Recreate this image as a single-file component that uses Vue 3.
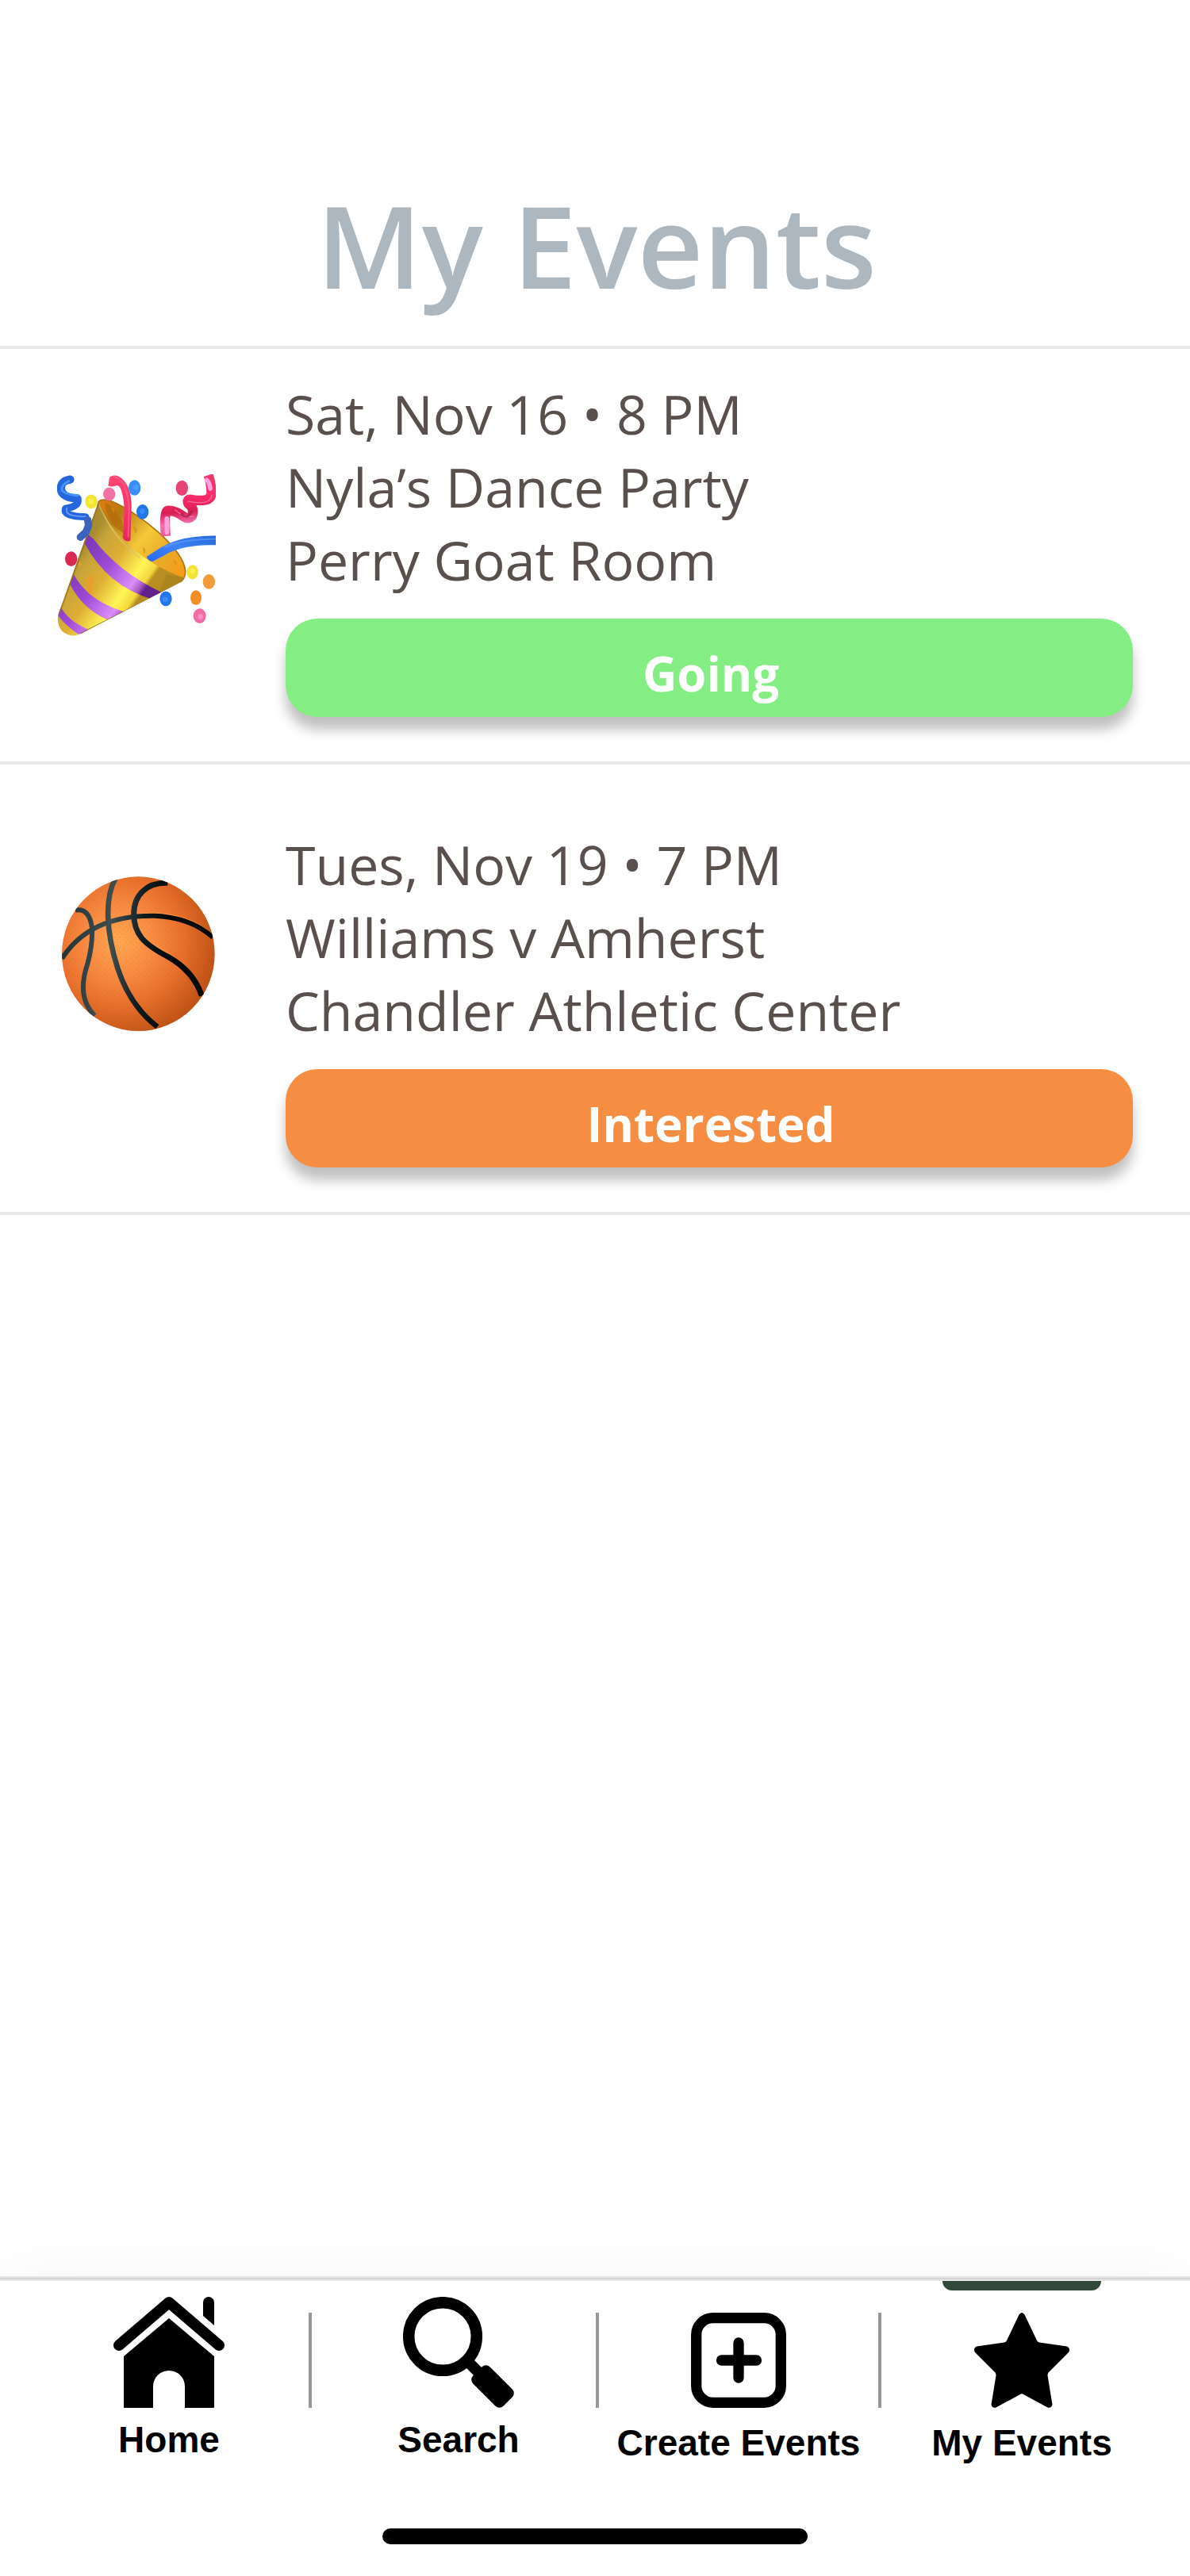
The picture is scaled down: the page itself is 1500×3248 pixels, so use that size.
<script setup>
const events = [
  {
    id: 'party',
    lines: ['Sat, Nov 16 • 8 PM', 'Nyla’s Dance Party', 'Perry Goat Room'],
    status: 'Going',
  },
  {
    id: 'ball',
    lines: ['Tues, Nov 19 • 7 PM', 'Williams v Amherst', 'Chandler Athletic Center'],
    status: 'Interested',
  },
]
</script>

<template>
  <div class="page">
    <header class="header">
      <h1>My Events</h1>
    </header>

    <main class="events">
      <article v-for="event in events" :key="event.id" class="event" :class="event.id">
        <svg v-if="event.id === 'party'" class="emoji" width="200" height="204" viewBox="96 85 600 610" preserveAspectRatio="none" aria-hidden="true">
          <defs>
            <linearGradient id="cone" gradientUnits="userSpaceOnUse" x1="170" y1="400" x2="400" y2="560">
              <stop offset="0" stop-color="#a98d31" />
              <stop offset=".15" stop-color="#c7a43a" />
              <stop offset=".45" stop-color="#dfae35" />
              <stop offset=".78" stop-color="#fff557" />
              <stop offset=".94" stop-color="#f4d83e" />
              <stop offset="1" stop-color="#b98e22" />
            </linearGradient>
            <linearGradient id="mouth" gradientUnits="userSpaceOnUse" x1="260" y1="190" x2="570" y2="470">
              <stop offset="0" stop-color="#e07c12" />
              <stop offset=".2" stop-color="#b67a12" />
              <stop offset=".5" stop-color="#f5c83a" />
              <stop offset=".75" stop-color="#e8ab28" />
              <stop offset="1" stop-color="#f89a18" />
            </linearGradient>
            <linearGradient id="stripe" gradientUnits="userSpaceOnUse" x1="170" y1="400" x2="400" y2="560">
              <stop offset="0" stop-color="#7d39b8" />
              <stop offset=".4" stop-color="#9d4ad6" />
              <stop offset=".82" stop-color="#dc8efa" />
              <stop offset=".93" stop-color="#a95bc4" />
              <stop offset="1" stop-color="#62218c" />
            </linearGradient>
            <linearGradient id="red" x1="0" y1="0" x2="1" y2="1">
              <stop offset="0" stop-color="#ff476d" />
              <stop offset=".6" stop-color="#fb386f" />
              <stop offset="1" stop-color="#d9224f" />
            </linearGradient>
            <linearGradient id="pink" gradientUnits="userSpaceOnUse" x1="500" y1="100" x2="520" y2="320">
              <stop offset="0" stop-color="#e83b69" />
              <stop offset=".35" stop-color="#ff2c6b" />
              <stop offset=".6" stop-color="#d91f52" />
              <stop offset=".8" stop-color="#ee71b0" />
              <stop offset="1" stop-color="#e45a88" />
            </linearGradient>
            <linearGradient id="blue" x1="0" y1="1" x2="1" y2="0">
              <stop offset="0" stop-color="#2867ff" />
              <stop offset=".5" stop-color="#3f84f4" />
              <stop offset="1" stop-color="#2468da" />
            </linearGradient>
            <clipPath id="coneBody">
              <path d="M252 190C300 310 430 430 578 475Q575 487 560 493L190 684Q150 705 116 678Q92 650 101 612Z" />
            </clipPath>
          </defs>
          <path d="M252 190Q262 174 300 186C400 225 575 365 581 450Q582 477 565 485Q490 520 360 390T252 190Z" fill="url(#mouth)" stroke="#a77318" stroke-width="5" />
          <path d="M277 192C300 200 350 240 347 308L313 280Q280 240 277 192Z" fill="#b46c0c" opacity=".75" />
          <path d="M300 210q20 0 10 24zM384 280q25 12 8 30zM420 360q18 8 4 24zM535 405q22 15 8 24z" fill="#d98b14" opacity=".7" />
          <path d="M252 190C300 310 430 430 578 475Q575 487 560 493L190 684Q150 705 116 678Q92 650 101 612Z" fill="url(#cone)" />
          <g clip-path="url(#coneBody)">
            <path d="M508 462Q550 472 582 474L560 500L470 545Q495 510 508 462Z" fill="#a9821f" opacity=".75" />
            <path d="M208 308L235 330Q325 450 490 530L455 556Q285 505 200 345Z" fill="url(#stripe)" />
            <path d="M158 460Q210 560 350 604L285 633Q190 590 145 500Z" fill="url(#stripe)" />
            <path d="M109 584Q140 640 215 670L185 695Q120 650 94 610Z" fill="url(#stripe)" />
            <path d="M252 190Q300 320 410 400" fill="none" stroke="#dfc263" stroke-width="5" opacity=".8" />
            <path d="M252 190L101 612" stroke="#98711b" stroke-width="11" opacity=".75" />
            <path d="M584 489L185 690" stroke="#7e5b14" stroke-width="13" opacity=".85" />
            <path d="M217 475Q243 430 230 505T205 480M180 410l10 12-13 22z" fill="#ed9c2c" opacity=".8" />
          </g>
          <path d="M289 128L294 96Q319 79 346 106Q383 145 376 234L373 335Q357 344 344 325L350 210Q343 128 322 127Q304 135 289 128Z" fill="url(#red)" />
          <path d="M309 93Q362 104 368 217L365 323" fill="none" stroke="#ff5b80" stroke-width="7" opacity=".8" />
          <path d="M434 396L484 364Q560 315 696 317V352Q570 348 498 392L457 414Q440 412 434 396Z" fill="url(#blue)" />
          <path d="M500 360Q578 328 696 329" fill="none" stroke="#639cff" stroke-width="7" opacity=".6" />
          <g fill="none" stroke="#2366dd" stroke-linecap="round" stroke-linejoin="round">
            <path d="M145 105Q104 111 112 148Q122 174 172 176" stroke-width="31" />
            <path d="M174 178Q182 206 128 214Q115 243 204 246" stroke-width="27" />
            <path d="M140 111Q110 126 114 146Q132 163 175 165" stroke="#4594ff" stroke-width="9" />
            <path d="M133 212Q121 246 202 244" stroke="#6fa0f5" stroke-width="5" />
            <path d="M212 258L215 278L205 303L184 322" stroke="#3d64bc" stroke-width="28" />
          </g>
          <g fill="none" stroke="url(#pink)" stroke-linejoin="round">
            <path d="M507 318Q499 226 514 222Q541 220 574 244Q592 258 607 241Q616 212 592 196Q585 178 602 180Q680 194 679 156Q680 124 668 88" stroke-width="37" />
            <path d="M541 219Q578 250 613 244M590 187Q677 205 681 163" stroke="#ff8cb5" stroke-width="4" opacity=".65" />
            <path d="M511 252V303M662 107Q673 118 675 139" stroke="#ffa1dd" stroke-width="17" stroke-linecap="round" />
            <path d="M606 222Q592 260 564 233" stroke="#a71540" stroke-width="8" opacity=".7" />
          </g>
          <g>
            <ellipse cx="389" cy="136" rx="23" ry="29" fill="#3b8cf7" />
            <ellipse cx="419" cy="227" rx="23" ry="28" fill="#2776e9" />
            <ellipse cx="507" cy="554" rx="23" ry="28" fill="#2576ed" />
            <ellipse cx="225" cy="188" rx="23" ry="27" fill="#f3e532" />
            <ellipse cx="608" cy="454" rx="22" ry="27" fill="#f2e336" />
            <ellipse cx="293" cy="160" rx="23" ry="25" fill="#f471a6" />
            <ellipse cx="568" cy="137" rx="23" ry="29" fill="#e64276" />
            <ellipse cx="149" cy="404" rx="23" ry="28" fill="#db2851" />
            <ellipse cx="670" cy="490" rx="23" ry="28" fill="#f39a3a" />
            <ellipse cx="621" cy="550" rx="21" ry="28" fill="#f28e23" />
            <ellipse cx="635" cy="619" rx="24" ry="28" fill="#ee6da5" />
          </g>
          <g opacity=".55">
            <circle cx="394" cy="134" r="10" fill="#50a9ff" />
            <circle cx="418" cy="224" r="10" fill="#48a0ff" />
            <circle cx="505" cy="557" r="10" fill="#4aa2ff" />
            <circle cx="224" cy="188" r="10" fill="#ffff58" />
            <circle cx="608" cy="450" r="10" fill="#ffff60" />
            <circle cx="638" cy="622" r="10" fill="#ffafe0" />
          </g>
        </svg>

        <svg v-else class="emoji" width="200" height="200" viewBox="66 72 600 600" aria-hidden="true">
          <defs>
            <radialGradient id="ballShade" gradientUnits="userSpaceOnUse" cx="300" cy="320" r="370">
              <stop offset="0" stop-color="#ffa850" />
              <stop offset=".35" stop-color="#f88b42" />
              <stop offset=".65" stop-color="#e8702b" />
              <stop offset="1" stop-color="#bf5216" />
            </radialGradient>
            <linearGradient id="seam" gradientUnits="userSpaceOnUse" x1="90" y1="350" x2="480" y2="380">
              <stop offset="0" stop-color="#233438" />
              <stop offset=".45" stop-color="#414e50" />
              <stop offset=".75" stop-color="#101c20" />
              <stop offset="1" stop-color="#050909" />
            </linearGradient>
            <pattern id="grain" width="20" height="20" patternUnits="userSpaceOnUse">
              <circle cx="5" cy="5" r="2" fill="#ce5e28" />
              <circle cx="15" cy="14" r="2" fill="#cf612d" />
            </pattern>
            <clipPath id="ballEdge"><ellipse cx="373" cy="368" rx="289" ry="292" /></clipPath>
          </defs>
          <ellipse cx="373" cy="368" rx="289" ry="292" fill="url(#ballShade)" />
          <g clip-path="url(#ballEdge)">
            <rect x="80" y="72" width="590" height="600" fill="url(#grain)" opacity=".4" />
            <g fill="none" stroke="#ffa04d" stroke-width="5" opacity=".55">
              <path d="M88 374Q210 220 435 214Q570 220 650 293M367 228Q367 294 440 340Q562 400 616 510" />
            </g>
            <g fill="none" stroke="url(#seam)" stroke-width="18">
              <path d="M84 386Q190 220 435 224Q570 230 655 305" />
              <path d="M135 203Q188 193 198 270Q201 334 181 406Q138 532 208 602" />
              <path d="M286 84C245 158 251 286 295 423Q342 565 445 644" stroke-width="20" />
              <path d="M484 100C405 97 356 145 356 217C356 292 391 330 487 380Q582 434 613 527" stroke-width="21" />
            </g>
          </g>
        </svg>

        <div class="details">
          <h2 class="text">
            <span v-for="line in event.lines" :key="line">{{ line }}</span>
          </h2>
          <button type="button" class="status">{{ event.status }}</button>
        </div>
      </article>
    </main>

    <footer class="footer">
      <nav class="tabs">
        <a href="#home" class="tab">
          <svg width="140" height="140" viewBox="0 0 140 140" aria-hidden="true">
            <path d="M7 61L70 7L133 61" fill="none" stroke="#000" stroke-width="14" stroke-linecap="round" stroke-linejoin="round" />
            <path d="M113 24V7a7 7 0 0 1 14 0V36ZM70 27L127 75V139Q127 140 126 140H90V113a20 20 0 0 0-40 0V140H14Q13 140 13 139V75Z" />
          </svg>
          <span>Home</span>
        </a>
        <i class="divider"></i>
        <a href="#search" class="tab search">
          <svg width="140" height="140" viewBox="0 0 140 140" aria-hidden="true">
            <circle cx="50" cy="50" r="42.8" fill="none" stroke="#000" stroke-width="14.5" />
            <path d="M78 78L103 103" stroke="#000" stroke-width="14" />
            <rect x="86" y="98" width="54" height="30" rx="7" transform="rotate(45 113 113)" />
          </svg>
          <span>Search</span>
        </a>
        <i class="divider"></i>
        <a href="#create" class="tab low">
          <svg width="120" height="120" viewBox="0 0 120 120" aria-hidden="true">
            <g fill="none" stroke="#000" stroke-width="13.3">
              <rect x="6.7" y="6.7" width="106.6" height="106.6" rx="21" />
              <path d="M60 38V82M38.500 60H82.500" stroke-linecap="round" />
            </g>
          </svg>
          <span>Create Events</span>
        </a>
        <i class="divider"></i>
        <a href="#events" class="tab low active" aria-current="page">
          <svg width="120" height="120" viewBox="0 0 120 120" aria-hidden="true">
            <path d="M56.500 2.500Q60-2.500 63.500 2.500L79 35Q80 37 82 37.500L117 42.500Q122 45 119 50L93.500 75.500Q92.500 77 92.500 79L98.500 116Q97 121 92.500 119.500L62 103Q60 101.500 58 103L27.500 119.500Q23 121 21.500 116L27.500 79Q27.500 77 26.500 75.500L1 50Q-2 45 3 42.500L38 37.500Q40 37 41 35Z" />
          </svg>
          <span>My Events</span>
        </a>
      </nav>
      <div class="home-bar"></div>
    </footer>
  </div>
</template>

<style>
body {
  background: #fff;
}
</style>

<style scoped>
.page {
  min-height: 100vh;
  display: flex;
  flex-direction: column;
  background: #fff;
  font-family: "Open Sans", "Noto Sans", sans-serif;
}

h1,
h2 {
  margin: 0;
}

.header {
  padding: 210px 0 30px 4px;
  border-bottom: 4px solid #e9e9e9;
}

h1 {
  color: #adb7c0;
  font-size: 144px;
  font-weight: 600;
  line-height: 196px;
  text-align: center;
}

.event {
  display: flex;
  align-items: flex-start;
  gap: 88px;
  padding: 36px 72px 56px;
  border-bottom: 4px solid #e9e9e9;
}

.event.ball {
  padding-top: 80px;
}

.emoji {
  flex: none;
  margin-top: 122px;
}

.ball .emoji {
  margin-top: 60px;
}

.details {
  flex: 1;
  min-width: 0;
}

.text {
  margin-bottom: 28px;
  color: #594f4d;
  font-size: 68px;
  font-weight: 400;
  line-height: 92px;
}

.text span {
  display: block;
}

.status {
  display: block;
  width: 100%;
  height: 124px;
  padding: 14px 0 0 4px;
  border: 0;
  border-radius: 40px;
  box-shadow: 0 16px 16px rgba(0, 0, 0, 0.25);
  background: #84ee84;
  color: #fff;
  font: 700 60px/82px "Open Sans", sans-serif;
  text-align: center;
}

.ball .status {
  background: #f58d42;
}

.footer {
  margin-top: auto;
  padding-bottom: 40px;
  background: #fff;
  box-shadow: 0 0 80px rgba(0, 0, 0, 0.04);
}

.footer::before {
  content: "";
  display: block;
  height: 2px;
  border: solid #e6e6e6;
  border-width: 2px 0;
  background: #d4d4d4;
}

.tabs {
  display: grid;
  grid-template-columns:
    minmax(0, 352fr) 4px minmax(0, 358fr) 4px
    minmax(0, 352fr) 4px minmax(0, 354fr);
  padding: 0 35px 0 37px;
}

.tab {
  position: relative;
  display: flex;
  flex-direction: column;
  align-items: center;
  gap: 8px;
  padding-top: 20px;
  color: #000;
  font: 700 46px/64px "Liberation Sans", sans-serif;
  text-decoration: none;
  white-space: nowrap;
}

.tab.search {
  padding-left: 12px;
}

.tab.low {
  gap: 12px;
  padding-top: 40px;
}

.active::before {
  content: "";
  position: absolute;
  top: 0;
  width: 200px;
  height: 12px;
  border-radius: 0 0 16px 16px;
  background: #30493b;
}

.divider {
  height: 120px;
  margin-top: 40px;
  background: #979797;
}

.home-bar {
  width: 536px;
  height: 20px;
  margin: 76px auto 0;
  border-radius: 10px;
  background: #000;
}
</style>
